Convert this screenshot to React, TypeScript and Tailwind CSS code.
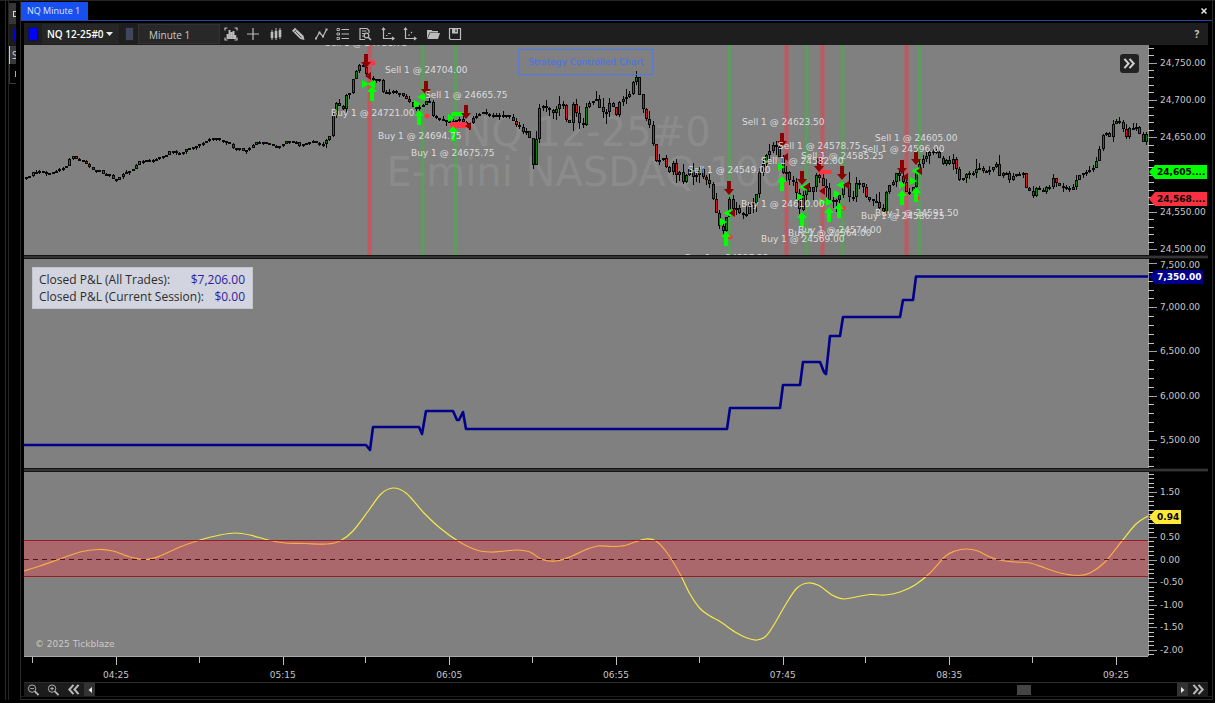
import type { CSSProperties, ReactNode } from 'react'

type Point = [number, number]
type Box = { x: number; y: number; w: number; h: number }

// Each pane draws in the same coordinate space, only the viewBox differs
const PRICE_BOX: Box = { x: 24, y: 45, w: 1124, h: 210 }
const PNL_BOX: Box = { x: 24, y: 259, w: 1124, h: 209 }
const OSC_BOX: Box = { x: 24, y: 472, w: 1124, h: 184 }

const viewBox = (b: Box) => `${b.x} ${b.y} ${b.w} ${b.h}`

function place(box: Box, x: number, y: number): CSSProperties {
  return { left: `${((x - box.x) / box.w) * 100}%`, top: `${((y - box.y) / box.h) * 100}%` }
}

// ---------- price data ----------

const closes: Point[] = [
  [24, 177], [30, 176], [33, 172], [40, 171], [46, 174], [53, 172], [60, 169], [66, 166], [70, 158], [72, 156], [75, 158],
  [79, 160], [84, 161], [87, 165], [90, 168], [95, 172], [99, 170], [103, 174], [110, 175], [113, 179], [117, 180],
  [121, 175], [125, 172], [131, 171], [134, 168], [137, 163], [140, 161], [147, 160], [153, 160], [160, 157],
  [166, 155], [170, 150], [174, 152], [178, 153], [184, 152], [187, 148], [194, 147], [200, 144], [206, 141],
  [212, 138], [215, 137], [218, 140], [223, 141], [230, 144], [233, 149], [240, 148], [244, 152], [250, 147],
  [256, 142], [263, 142], [269, 144], [276, 147], [282, 145], [286, 141], [296, 142], [299, 146], [306, 143],
  [313, 141], [319, 145], [322, 145], [326, 140], [329, 138], [332, 117], [336, 103], [339, 105], [342, 112],
  [346, 95], [350, 93], [353, 77], [356, 71], [359, 65], [362, 65], [364, 71], [368, 77], [372, 80], [379, 79],
  [383, 93], [387, 94], [391, 90], [395, 93], [400, 93], [404, 97], [408, 100], [413, 107], [419, 107],
  [423, 105], [427, 100], [431, 103], [433, 118], [440, 119], [447, 121], [453, 121], [460, 119], [466, 126],
  [470, 122], [473, 118], [478, 115], [482, 112], [490, 115], [497, 115], [502, 115], [508, 115], [512, 120],
  [516, 125], [520, 127], [523, 133], [527, 130], [529, 134], [532, 169], [535, 149], [539, 108], [543, 106],
  [549, 110], [552, 114], [556, 109], [559, 104], [563, 105], [566, 120], [569, 126], [572, 102], [576, 113],
  [579, 122], [582, 128], [586, 107], [589, 103], [592, 101], [596, 99], [599, 107], [603, 113], [606, 112],
  [609, 103], [613, 107], [616, 115], [619, 102], [626, 97], [629, 95], [632, 83], [636, 77], [639, 93],
  [643, 111], [646, 119], [649, 123], [653, 146], [656, 161], [660, 160], [663, 158], [666, 167], [669, 173],
  [672, 161], [676, 175], [679, 171], [683, 183], [686, 175], [689, 168], [693, 178], [696, 175], [700, 168],
  [703, 178], [706, 180], [709, 183], [712, 196], [716, 213], [719, 225], [723, 232], [726, 217], [729, 198],
  [733, 210], [736, 208], [739, 213], [746, 214], [749, 205], [753, 203], [756, 194], [759, 173], [763, 163],
  [766, 155], [769, 152], [772, 145], [777, 147], [779, 155], [782, 173], [786, 172], [789, 180], [793, 182],
  [796, 193], [799, 211], [803, 193], [806, 187], [809, 192], [813, 187], [816, 175], [819, 177], [823, 187],
  [826, 188], [829, 200], [833, 200], [837, 200], [840, 193], [843, 183], [846, 183], [849, 197], [853, 197],
  [856, 183], [859, 183], [863, 187], [866, 197], [870, 200], [877, 202], [880, 210], [883, 212], [886, 192],
  [889, 185], [893, 182], [897, 170], [899, 175], [903, 183], [906, 192], [909, 192], [913, 187], [917, 167],
  [920, 163], [923, 158], [926, 156], [929, 152], [935, 150], [939, 157], [943, 165], [946, 160], [949, 165],
  [953, 158], [957, 172], [960, 182], [963, 178], [967, 173], [973, 173], [977, 167], [980, 168], [985, 173],
  [992, 168], [997, 163], [1000, 180], [1003, 172], [1007, 173], [1010, 182], [1013, 175], [1023, 173],
  [1026, 188], [1029, 190], [1033, 197], [1036, 188], [1043, 192], [1047, 185], [1050, 187], [1053, 177],
  [1057, 185], [1063, 187], [1070, 190], [1073, 187], [1077, 177], [1080, 175], [1087, 171], [1093, 168],
  [1097, 158], [1100, 147], [1103, 134], [1106, 133], [1110, 138], [1113, 122], [1117, 120], [1119, 121],
  [1123, 130], [1126, 137], [1129, 128], [1137, 127], [1139, 133], [1143, 143], [1146, 134],
]

function closeAt(x: number): number {
  const i = closes.findIndex(p => p[0] >= x)
  if (i <= 0) return closes[i === 0 ? 0 : closes.length - 1][1]
  const [x0, y0] = closes[i - 1]
  const [x1, y1] = closes[i]
  return y0 + ((y1 - y0) * (x - x0)) / (x1 - x0)
}

// deterministic noise for the wicks
function noise(n: number): number {
  const v = Math.sin(n * 12.9898) * 43758.5453
  return v - Math.floor(v)
}

function wickSize(x: number): number {
  if (x < 325) return 2
  if (x < 530) return 5
  if (x < 1000) return 12
  return 6
}

const candles = Array.from({ length: 337 }, (_, i) => {
  const x = 26 + (i * 10) / 3
  const open = closeAt(x - 10 / 3)
  const close = closeAt(x)
  const top = Math.min(open, close)
  const bottom = Math.max(open, close, top + 2)
  const w = wickSize(x)
  return {
    x: Math.round(x),
    top: Math.round(top),
    bottom: Math.round(bottom),
    high: Math.round(top - noise(i) * noise(i + 7) * w),
    low: Math.round(bottom + noise(i + 500) * noise(i + 90) * w),
    up: close <= open,
  }
})

const bands: Array<[number, 'long' | 'short']> = [
  [369, 'short'], [422, 'long'], [455, 'long'], [729, 'long'], [786, 'short'],
  [806, 'long'], [822, 'short'], [842, 'long'], [906, 'short'], [919, 'long'],
]

// tip of each arrow
const sellArrows: Point[] = [
  [366, 68], [426, 95], [466, 119], [729, 195], [782, 147], [802, 185], [819, 172], [842, 180], [902, 174], [916, 165],
]
const buyArrows: Point[] = [
  [372, 86], [419, 110], [453, 126], [726, 231], [782, 176], [802, 212], [829, 207], [839, 203], [902, 190], [916, 187],
]
const exitShorts: Point[] = [
  [365, 84], [417, 104], [451, 118], [723, 222], [781, 167], [800, 197], [822, 202], [829, 202], [837, 194], [902, 185], [913, 181],
]
const exitLongs: Point[] = [[372, 84], [422, 97], [728, 213], [804, 187], [841, 185], [916, 171]]
const exitSells: Point[] = [
  [368, 76], [468, 126], [732, 213], [785, 157], [806, 187], [822, 191], [846, 185], [905, 177], [919, 171],
]
const stopDots: Point[] = [[373, 63], [427, 116], [730, 237], [843, 208], [917, 198]]

const tradeLabels: Array<[string, number, number]> = [
  ['Sell 1 @ 24731.75', 325, 43],
  ['Sell 1 @ 24704.00', 385, 70],
  ['Sell 1 @ 24665.75', 425, 95],
  ['Buy 1 @ 24721.00', 331, 113],
  ['Buy 1 @ 24694.75', 378, 136],
  ['Buy 1 @ 24675.75', 411, 153],
  ['Buy 1 @ 24537.25', 685, 258],
  ['Sell 1 @ 24549.00', 688, 170],
  ['Sell 1 @ 24623.50', 742, 122],
  ['Sell 1 @ 24578.75', 778, 146],
  ['Sell 1 @ 24585.25', 801, 156],
  ['Sell 1 @ 24582.00', 761, 161],
  ['Buy 1 @ 24610.00', 741, 204],
  ['Buy 1 @ 24569.00', 761, 239],
  ['Buy 1 @ 24564.00', 788, 233],
  ['Buy 1 @ 24574.00', 798, 230],
  ['Sell 1 @ 24605.00', 875, 138],
  ['Sell 1 @ 24596.00', 862, 149],
  ['Buy 1 @ 24586.25', 861, 216],
  ['Buy 1 @ 24591.50', 875, 213],
]

// ---------- P&L and oscillator data ----------

const pnl: Point[] = [
  [24, 445], [366, 445], [370, 450], [373, 427], [419, 427], [422, 434], [426, 411], [453, 411], [457, 420],
  [459, 420], [463, 412], [466, 429], [727, 429], [730, 408], [780, 408], [783, 385], [800, 385], [803, 362],
  [820, 362], [824, 372], [826, 374], [830, 336], [840, 336], [843, 317], [900, 317], [903, 300], [913, 300],
  [916, 276.5], [1148, 276.5],
]

const oscillator: Point[] = [
  [24, 571], [40, 566], [60, 559], [80, 552], [98, 549.5], [113, 551], [130, 557], [146, 559.5], [160, 556],
  [180, 547], [200, 540], [220, 535], [235, 533], [250, 535], [268, 540], [285, 543], [305, 543.5], [327, 544],
  [340, 541], [353, 531], [369, 510], [381, 494], [393, 488], [406, 493], [424, 513], [440, 528], [458, 541],
  [475, 549.5], [490, 552], [505, 551], [517, 550], [530, 552], [542, 559.5], [556, 561], [570, 557], [585, 550],
  [598, 546], [612, 546.5], [625, 545.5], [635, 542], [646, 539], [656, 541], [668, 554], [680, 574],
  [690, 594], [700, 608.5], [710, 616], [720, 621.5], [735, 632], [747, 638], [757, 640], [766, 636],
  [775, 623], [786, 604], [797, 588], [808, 583], [819, 585.5], [832, 595], [844, 599], [858, 596.5], [870, 594.5],
  [885, 595], [900, 592], [915, 585], [930, 573], [945, 556.5], [955, 551], [966, 549], [978, 551], [990, 557],
  [1002, 560.5], [1015, 562], [1030, 563], [1045, 568], [1060, 573], [1078, 575.5], [1090, 573], [1105, 562],
  [1122, 541], [1136, 524], [1148, 516],
]

// Catmull-Rom through the points
function smooth(pts: Point[]): string {
  let d = `M${pts[0][0]} ${pts[0][1]}`
  for (let i = 0; i < pts.length - 1; i++) {
    const p0 = pts[i - 1] ?? pts[i]
    const p1 = pts[i]
    const p2 = pts[i + 1]
    const p3 = pts[i + 2] ?? p2
    d += ` C${p1[0] + (p2[0] - p0[0]) / 6} ${p1[1] + (p2[1] - p0[1]) / 6}`
    d += ` ${p2[0] - (p3[0] - p1[0]) / 6} ${p2[1] - (p3[1] - p1[1]) / 6} ${p2[0]} ${p2[1]}`
  }
  return d
}

// ---------- icons ----------

const Icon = ({ children, size = 14 }: { children: ReactNode; size?: number }) => (
  <svg width={size} height={size} viewBox="0 0 14 14" fill="none" stroke="currentColor" strokeWidth="1.2">
    {children}
  </svg>
)

const tools: Array<{ name: string; icon: ReactNode }> = [
  {
    name: 'Chart style',
    icon: (
      <Icon>
        <path d="M1 3.5V1h2.5M10.5 1H13v2.5M1 10.5V13h2.5M10.5 13H13v-2.5" />
        <path d="M3.5 12V7M5.5 12V3M7.5 12V5M9.5 12V4M11.3 12V8" strokeWidth="1.9" />
      </Icon>
    ),
  },
  { name: 'Crosshair', icon: <Icon><path d="M7 1v12M1 7h12" /></Icon> },
  {
    name: 'Bars',
    icon: (
      <Icon>
        <path d="M3 3v10M7 1v12M11 1v11" strokeWidth="1" />
        <path d="M3 5v6M7 4v7M11 3v7" strokeWidth="2.6" />
      </Icon>
    ),
  },
  {
    name: 'Drawing tools',
    icon: (
      <Icon>
        <path d="M1 3.8l3-3 8.500 8 1 4.200-4.200-1z" fill="currentColor" stroke="none" />
        <path d="M2.800 5.500l2.900-2.900M4.500 4.500l6 6" stroke="#1e1e1e" strokeWidth="0.7" />
      </Icon>
    ),
  },
  {
    name: 'Indicators',
    icon: (
      <Icon>
        <path d="M2 11.5l3.500-6 3.500 4 3.500-7" />
        <path d="M1 10.5h2v2H1zM4.500 4.500h2v2h-2zM8 8.500h2v2H8zM11.500 1.500h2v2h-2z" fill="currentColor" stroke="none" />
      </Icon>
    ),
  },
  {
    name: 'Data list',
    icon: (
      <Icon>
        <path d="M1 1.5h2.500v2H1zM1 6h2.500v2H1zM1 10.5h2.500v2H1z" strokeWidth="0.9" />
        <path d="M5.500 2.500H13M5.500 7H13M5.500 11.500H13" />
      </Icon>
    ),
  },
  {
    name: 'Inspect',
    icon: (
      <Icon>
        <path d="M7 12.5H2v-11h7l2 2V6M4 4h4.500M4 6.500h2.500M4 9h2" />
        <circle cx="8.5" cy="8.5" r="2.3" />
        <path d="M10.200 10.200l2.800 2.800" strokeWidth="1.5" />
      </Icon>
    ),
  },
  {
    name: 'Fix scale',
    icon: (
      <Icon>
        <path d="M2.500 1v10.500H13M1 3l1.500-2L4 3M11 10l2 1.500-2 1.500" />
        <path d="M5 8.500h1.500M7 6.500h3" strokeWidth="0.9" />
      </Icon>
    ),
  },
  {
    name: 'Auto scale',
    icon: (
      <Icon>
        <path d="M2.500 1v10.500H13M1 3l1.500-2L4 3M11 10l2 1.500-2 1.500" />
        <path d="M5.500 8.500l1-1M8 6l1-1" />
      </Icon>
    ),
  },
  {
    name: 'Open',
    icon: (
      <Icon>
        <path d="M1 12V3h4.500l1 1H12v1.500H3.500z" fill="currentColor" stroke="none" />
        <path d="M4 6h10l-2 6H1.500z" fill="currentColor" stroke="none" />
      </Icon>
    ),
  },
  {
    name: 'Save',
    icon: (
      <Icon>
        <path d="M1.500 1.500h11v11h-10l-1-1z" />
        <path d="M4 1.500h6v5H4z" fill="currentColor" stroke="none" />
        <path d="M8 2.500v2.500" stroke="#1e1e1e" />
      </Icon>
    ),
  },
]

function Chevrons({ flip = false, size = 14 }: { flip?: boolean; size?: number }) {
  return (
    <svg width={size} height={size} viewBox="0 0 14 14" fill="none" stroke="currentColor" strokeWidth="2.2">
      <path d={flip ? 'M7 2L2.500 7 7 12M12.500 2L8 7l4.500 5' : 'M1.500 2L6 7l-4.500 5M7 2l4.500 5L7 12'} />
    </svg>
  )
}

function Magnifier({ plus = false }: { plus?: boolean }) {
  return (
    <svg width="12" height="12" viewBox="0 0 13 13" fill="none" stroke="currentColor">
      <circle cx="5.5" cy="5" r="4" />
      <path d={plus ? 'M3.500 5h4M5.500 3v4' : 'M3.500 5h4'} />
      <path d="M8.500 8l4 4" strokeWidth="1.8" />
    </svg>
  )
}

// ---------- panes ----------

type Badge = { text: string; y: number; tone: string }

function Axis({ box, labels, minor }: { box: Box; labels: Array<[string, number]>; minor: number[] }) {
  return (
    <>
      <svg
        className="absolute inset-y-0 left-0 h-full w-[10px]"
        viewBox={`0 ${box.y} 10 ${box.h}`}
        preserveAspectRatio="none"
        shapeRendering="crispEdges"
      >
        <rect x="0" y={box.y} width="1" height={box.h} fill="#8f8f8f" />
        {minor.map(y => (
          <rect key={y} x="0" y={Math.round(y)} width="6" height="1" fill="#c4c4c4" />
        ))}
        {labels.map(([text, y]) => (
          <rect key={text} x="0" y={Math.round(y)} width="9" height="1" fill="#a0a0a0" />
        ))}
      </svg>
      {labels.map(([text, y]) => (
        <span
          key={text}
          className="absolute left-3 -translate-y-1/2 text-[9px] leading-3 text-[#c8c8c8]"
          style={{ top: `${((Math.max(y, box.y + 6) - box.y) / box.h) * 100}%` }}
        >
          {text}
        </span>
      ))}
    </>
  )
}

function AxisBadges({ box, badges }: { box: Box; badges: Badge[] }) {
  return (
    <>
      {badges.map(b => (
        <span
          key={b.text}
          className={`absolute left-px -translate-y-1/2 whitespace-nowrap pr-[2px] pl-2 text-[9px] font-bold leading-[14px] [clip-path:polygon(0_50%,6px_0,100%_0,100%_100%,6px_100%)] ${b.tone}`}
          style={{ top: `${((b.y - box.y) / box.h) * 100}%` }}
        >
          {b.text}
        </span>
      ))}
    </>
  )
}

// evenly spaced ticks that stay inside the pane
function ticks(box: Box, from: number, step: number): number[] {
  const out: number[] = []
  for (let y = from; y < box.y + box.h - 1; y += step) out.push(y)
  return out
}

function PricePane() {
  return (
    <div className="flex min-h-0 flex-[210_1_0%]">
      <div className="relative min-w-0 flex-1 overflow-hidden bg-[#808080]">
        <div className="absolute inset-0 flex flex-col items-center justify-center whitespace-nowrap pt-1 text-[40px] leading-10 text-[#8b8b8b]">
          <span>NQ 12-25#0</span>
          <span>E-mini NASDAQ 100</span>
        </div>

        <svg className="absolute inset-0 h-full w-full" viewBox={viewBox(PRICE_BOX)} preserveAspectRatio="none">
          {bands.map(([x, side]) => (
            <rect
              key={x}
              x={x - 1.5}
              y={PRICE_BOX.y}
              width="4"
              height={PRICE_BOX.h}
              fill={side === 'long' ? '#30c030' : '#ff3040'}
              opacity={side === 'long' ? 0.4 : 0.5}
            />
          ))}
          <g shapeRendering="crispEdges">
            {candles.map(c => (
              <g key={c.x}>
                <rect x={c.x} y={c.high} width="1" height={c.low - c.high} fill="#080808" />
                <rect x={c.x - 1} y={c.top} width="3" height={c.bottom - c.top} fill="#080808" />
                <rect
                  x={c.x}
                  y={c.top + 1}
                  width="1"
                  height={Math.max(c.bottom - c.top - 2, 0)}
                  fill={c.up ? '#008a08' : '#e01414'}
                />
              </g>
            ))}
          </g>
          <g fill="#ff3344">
            <rect x="450" y="122" width="17" height="6" rx="2" />
            <rect x="818" y="170" width="14" height="4" rx="2" />
            <rect x="366" y="61" width="7" height="3" />
            {stopDots.map(([x, y]) => (
              <circle key={x} cx={x} cy={y} r="2.5" />
            ))}
          </g>
          <g fill="#00ff00">
            <rect x="451" y="112" width="14" height="4" rx="2" />
            {exitShorts.map(([x, y]) => (
              <path key={x} d={`M${x - 3} ${y - 4}l7 4-7 4z`} />
            ))}
            {exitLongs.map(([x, y]) => (
              <path key={x} d={`M${x + 3} ${y - 4}l-8 4 8 4z`} />
            ))}
            {buyArrows.map(([x, y]) => (
              <path key={x} d={`M${x} ${y}l5 6h-3v9h-4v-9h-3z`} />
            ))}
          </g>
          <g fill="#8b0000">
            {exitSells.map(([x, y]) => (
              <path key={x} d={`M${x + 3} ${y - 4}l-6 4 6 4z`} />
            ))}
            {sellArrows.map(([x, y]) => (
              <path key={x} d={`M${x} ${y}l-5-6h3v-8h4v8h3z`} />
            ))}
          </g>
        </svg>

        {tradeLabels.map(([text, x, y]) => (
          <span
            key={text}
            className="absolute -translate-y-1/2 whitespace-nowrap text-[9px] leading-3 text-[#dcdcdc]"
            style={place(PRICE_BOX, x, y)}
          >
            {text}
          </span>
        ))}

        <div className="absolute top-1 left-1/2 -translate-x-1/2 whitespace-nowrap border border-[#4a7af0] px-[9px] text-[9px] leading-6 text-[#3f74f5]">
          Strategy Controlled Chart
        </div>
        <button
          aria-label="Jump to latest bar"
          className="absolute top-[9px] right-[9px] flex size-[19px] items-center justify-center rounded-[3px] bg-[#222] text-[#d0d0d0]"
        >
          <Chevrons size={13} />
        </button>
      </div>
      <div className="relative w-[60px] overflow-hidden">
        <Axis
          box={PRICE_BOX}
          minor={ticks(PRICE_BOX, 47.6, 7.47)}
          labels={[
            ['24,750.00', 62.6],
            ['24,700.00', 100],
            ['24,650.00', 137.4],
            ['24,600.00', 174.7],
            ['24,550.00', 212],
            ['24,500.00', 249.4],
          ]}
        />
        <AxisBadges
          box={PRICE_BOX}
          badges={[
            { text: '24,605....', y: 172, tone: 'bg-[#00ff00] text-black' },
            { text: '24,568....', y: 199, tone: 'bg-[#f83040] text-black' },
          ]}
        />
      </div>
    </div>
  )
}

function PnlPane() {
  return (
    <div className="flex min-h-0 flex-[209_1_0%]">
      <div className="relative min-w-0 flex-1 overflow-hidden bg-[#808080]">
        <svg className="absolute inset-0 h-full w-full" viewBox={viewBox(PNL_BOX)} preserveAspectRatio="none">
          <polyline
            points={pnl.map(p => p.join(',')).join(' ')}
            fill="none"
            stroke="#00008b"
            strokeWidth="2.6"
            strokeLinejoin="round"
          />
        </svg>
        <dl className="absolute top-2 left-2 w-[221px] border border-[#c4c6ce] bg-[#d2d5df] py-[3px] pr-[7px] pl-1.5 font-['Open_Sans',sans-serif] text-[12px] leading-[17px]">
          <div className="flex justify-between">
            <dt className="text-[#2c2c2c]">Closed P&amp;L (All Trades):</dt>
            <dd className="text-[#30209c]">$7,206.00</dd>
          </div>
          <div className="flex justify-between">
            <dt className="text-[#2c2c2c]">Closed P&amp;L (Current Session):</dt>
            <dd className="text-[#30209c]">$0.00</dd>
          </div>
        </dl>
      </div>
      <div className="relative w-[60px] overflow-hidden">
        <Axis
          box={PNL_BOX}
          minor={ticks(PNL_BOX, 263, 8.84)}
          labels={[
            ['7,500.00', 263],
            ['7,000.00', 307.2],
            ['6,500.00', 351.4],
            ['6,000.00', 395.6],
            ['5,500.00', 440],
          ]}
        />
        <AxisBadges box={PNL_BOX} badges={[{ text: '7,350.00', y: 277, tone: 'bg-[#00008b] text-white' }]} />
      </div>
    </div>
  )
}

function OscillatorPane() {
  return (
    <div className="flex min-h-0 flex-[184_1_0%]">
      <div className="relative min-w-0 flex-1 overflow-hidden bg-[#808080]">
        <svg className="absolute inset-0 h-full w-full" viewBox={viewBox(OSC_BOX)} preserveAspectRatio="none">
          <path d={smooth(oscillator)} fill="none" stroke="#f7e84a" strokeWidth="1.2" />
          <path d="M24 559.5H1148" stroke="#000" strokeDasharray="5 4" />
          <rect x="24" y="541" width="1124" height="36" fill="#ff3344" opacity="0.33" />
          <path d="M24 540.5H1148M24 576.5H1148" stroke="#9c1c24" />
        </svg>
        <p className="absolute bottom-1.5 left-[11px] text-[9px] leading-3 text-[#cacaca]">© 2025 Tickblaze</p>
      </div>
      <div className="relative w-[60px] overflow-hidden">
        <Axis
          box={OSC_BOX}
          minor={ticks(OSC_BOX, 473.7, 4.52)}
          labels={[
            ['1.50', 492],
            ['0.50', 537],
            ['0.00', 559.6],
            ['-0.50', 582],
            ['-1.00', 604.8],
            ['-1.50', 627.4],
            ['-2.00', 650],
          ]}
        />
        <AxisBadges box={OSC_BOX} badges={[{ text: '0.94', y: 517, tone: 'bg-[#ffe838] text-black' }]} />
      </div>
    </div>
  )
}

const Splitter = () => <div className="h-1 shrink-0 border-y border-[#141414] bg-[#333]" />

function TimeAxis() {
  const times = ['04:25', '05:15', '06:05', '06:55', '07:45', '08:35', '09:25']
  return (
    <div className="flex h-[26px] shrink-0">
      <div className="relative flex-1 border-t border-[#a8a8a8]">
        {times.map((time, i) => {
          const left = ((92 + (i * 500) / 3) / 1124) * 100
          const half = ((8 + (i * 500) / 3) / 1124) * 100
          return (
            <div key={time}>
              <span className="absolute top-0 h-1.5 w-px bg-[#c0c0c0]" style={{ left: `${half}%` }} />
              <span className="absolute top-0 h-2 w-px bg-[#c0c0c0]" style={{ left: `${left}%` }} />
              <span
                className="absolute top-3 -translate-x-1/2 text-[9px] leading-3 text-[#c8c8c8]"
                style={{ left: `${left}%` }}
              >
                {time}
              </span>
            </div>
          )
        })}
      </div>
      <div className="w-[60px]" />
    </div>
  )
}

function ScrollBar() {
  return (
    <div className="flex h-[14px] shrink-0 border-t border-[#2e2e2e] text-[#b8b8b8]">
      <div className="flex bg-[#1c1c1c]">
        <button aria-label="Zoom out" className="flex w-5 items-center justify-center pr-0.5"><Magnifier /></button>
        <button aria-label="Zoom in" className="flex w-5 items-center justify-center pr-0.5"><Magnifier plus /></button>
        <button aria-label="First bar" className="flex w-5 items-center justify-center pr-0.5"><Chevrons flip size={13} /></button>
        <button aria-label="Scroll left" className="flex w-[11px] items-center justify-center bg-[#333]">
          <svg width="4" height="6" viewBox="0 0 4 6" fill="#e8e8e8"><path d="M4 0v6L0.500 3z" /></svg>
        </button>
      </div>
      <div className="flex flex-1 items-center pr-[146px]">
        <div className="ml-auto h-[10px] w-[14px] bg-[#444]" />
      </div>
      <button aria-label="Scroll right" className="flex w-[11px] items-center justify-center bg-[#333]">
        <svg width="4" height="6" viewBox="0 0 4 6" fill="#e8e8e8"><path d="M0 0v6l3.500-3z" /></svg>
      </button>
      <button aria-label="Last bar" className="flex w-5 items-center justify-center bg-[#1c1c1c]"><Chevrons size={13} /></button>
    </div>
  )
}

function Toolbar() {
  return (
    <div className="flex h-[22px] shrink-0 items-center bg-[#1e1e1e] font-['Open_Sans',sans-serif] text-[10px] text-[#c8c8c8]">
      <button aria-label="Link colour" className="ml-1 h-[14px] w-[10px] border border-[#10104a] bg-[#0000ff]" />
      <div className="relative ml-1 h-5 w-[77px] bg-[#262626]">
        <select
          aria-label="Instrument"
          className="h-full w-full appearance-none bg-transparent pl-[5px] font-semibold text-white outline-none"
        >
          <option>NQ 12-25#0</option>
        </select>
        <svg className="pointer-events-none absolute top-2 right-1.5" width="7" height="4" viewBox="0 0 7 4" fill="#e8e8e8">
          <path d="M0 0h7L3.500 4z" />
        </svg>
      </div>
      <button aria-label="Interval link colour" className="ml-1.5 h-[14px] w-[9px] border border-[#20222c] bg-[#42465c]" />
      <input
        aria-label="Interval"
        defaultValue="Minute 1"
        className="ml-1 h-5 w-[82px] border border-[#323232] bg-[#282828] px-2.5 pt-px outline-none"
      />
      <div className="flex w-[246px] justify-between">
        {tools.map(t => (
          <button key={t.name} title={t.name} aria-label={t.name} className="flex size-[22px] items-center justify-center text-[#bcbcbc]">
            {t.icon}
          </button>
        ))}
      </div>
      <button aria-label="Help" className="ml-auto w-[22px] font-bold">?</button>
    </div>
  )
}

// Slice of the window that sits behind this one
function BackWindow() {
  return (
    <div className="flex w-5 shrink-0 pl-[5px]">
      <div className="mb-[3px] w-[3px] border-l border-[#2a2a2a]" />
      <div className="mb-[3px] flex w-2 flex-col overflow-hidden border-l border-[#242424] font-['Open_Sans',sans-serif] text-[10px] text-[#d0d0d0]">
        <div className="mt-0.5 flex h-[21px] items-center justify-end bg-[#363636]">
          <span className="h-1.5 w-[3px] border-y border-l border-[#d8d8d8]" />
        </div>
        <div className="flex h-[22px] items-center justify-end bg-[#1a1a1a]">
          <span className="h-3 w-0.5 bg-[#0000e8]" />
        </div>
        <div className="flex h-[18px] items-center overflow-hidden border-l border-[#c8c8c8] bg-[#383838] pl-0.5">S</div>
        <div className="flex h-5 items-center justify-end border-b border-l border-[#383838]">
          <span className="h-1.5 w-px bg-[#70d0a0]" />
        </div>
      </div>
    </div>
  )
}

export default function App() {
  return (
    <div className="flex h-screen min-h-[420px] overflow-hidden border-t border-[#242424] bg-black font-['DejaVu_Sans',sans-serif]">
      <BackWindow />
      <main className="mr-0.5 mb-[3px] flex min-w-0 flex-1 flex-col border-x border-b border-[#2a2a2a]">
        <header className="mt-px flex h-[19px] shrink-0 items-stretch border-b border-[#2a45b0] font-['Open_Sans',sans-serif]">
          <button className="bg-[#1850f0] pr-2 pl-1.5 text-[9px] text-[#dfe6ff]">NQ Minute 1</button>
          <button aria-label="Close" className="ml-auto flex w-[17px] items-center justify-center text-[#e4e4e4]">
            <svg width="6" height="6" viewBox="0 0 6 6" stroke="currentColor" strokeWidth="1.5">
              <path d="M0.500 0.500l5 5M5.500 0.500l-5 5" />
            </svg>
          </button>
        </header>
        <div className="flex min-h-0 flex-1 flex-col pt-0.5 pr-1 pl-[3px]">
          <Toolbar />
          <PricePane />
          <Splitter />
          <PnlPane />
          <Splitter />
          <OscillatorPane />
          <TimeAxis />
          <ScrollBar />
        </div>
        <div className="h-[3px] shrink-0 border-t border-[#1c1c1c]" />
      </main>
    </div>
  )
}
